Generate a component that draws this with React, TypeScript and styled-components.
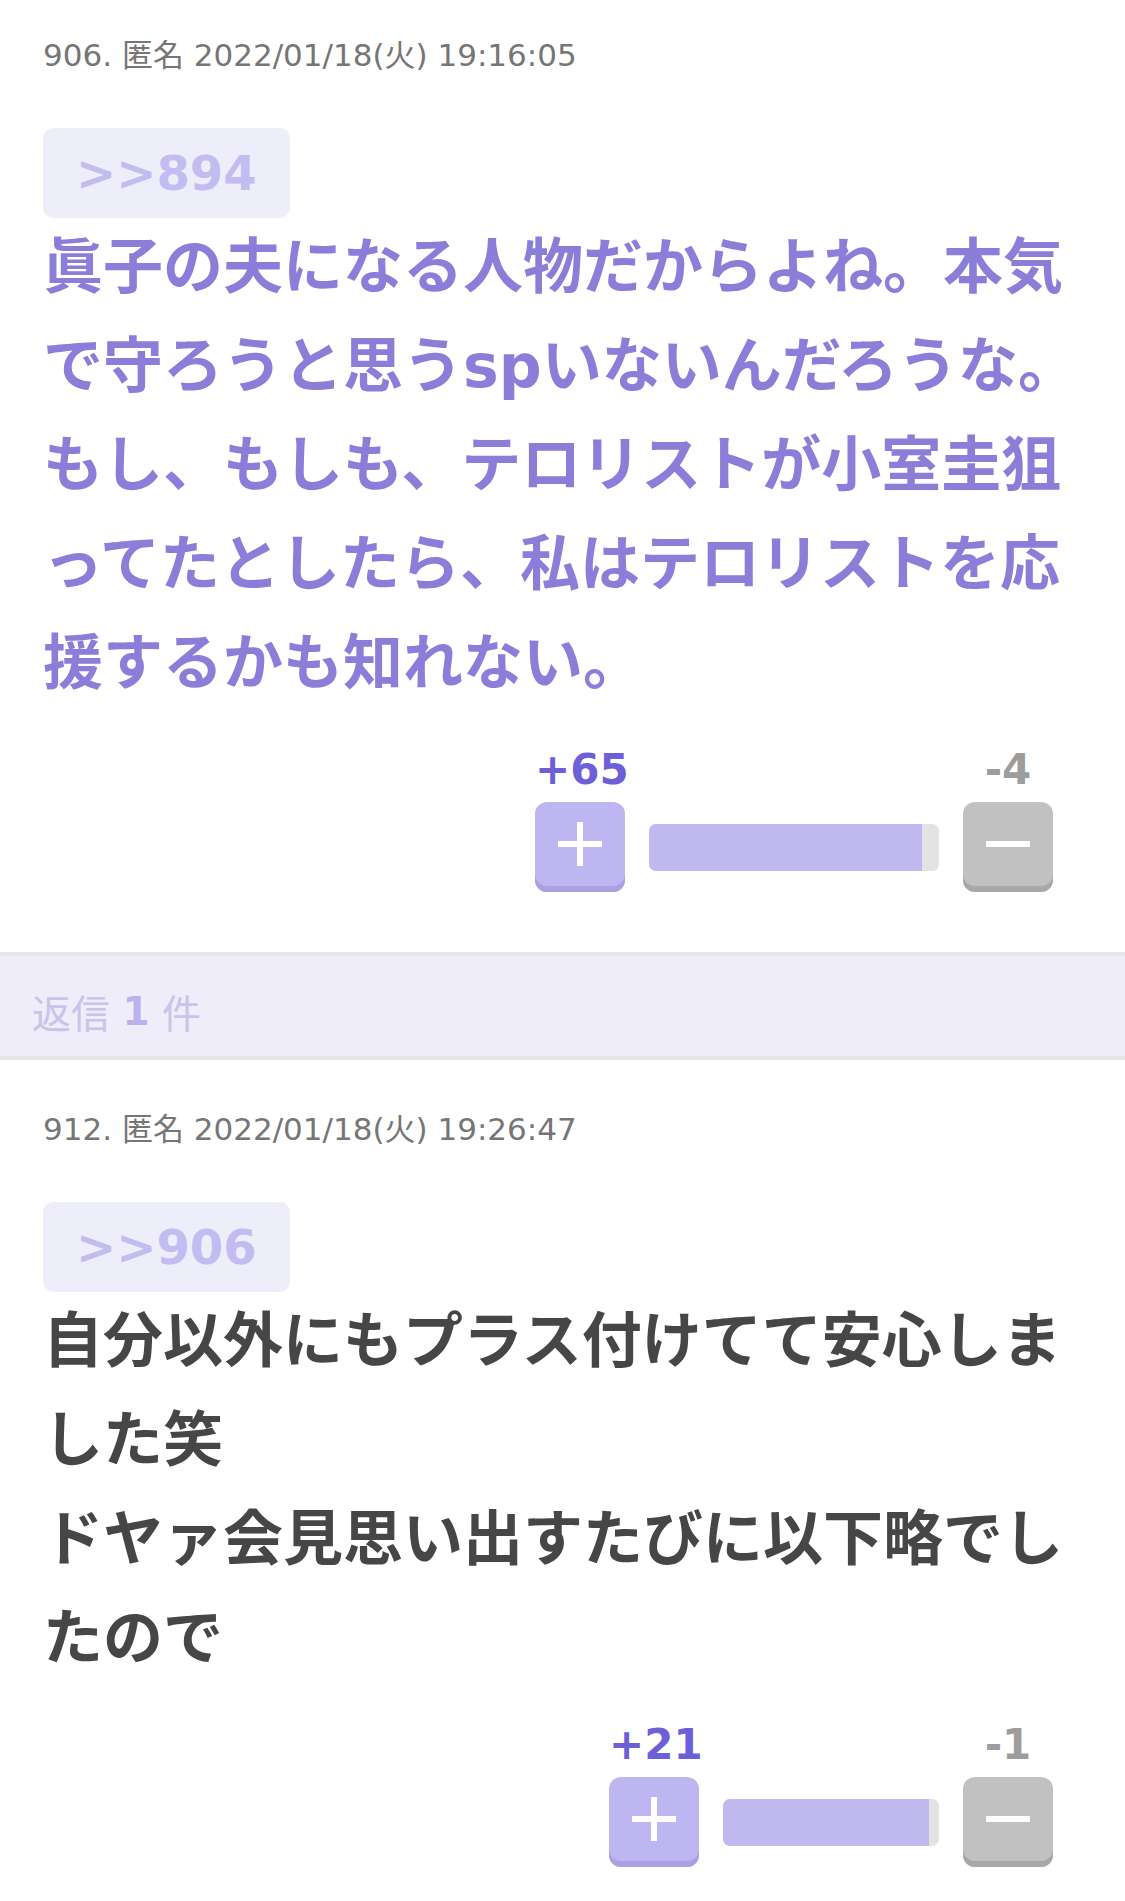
import React from "react"
import styled, { createGlobalStyle } from "styled-components"

const GlobalStyle = createGlobalStyle`
  html, body {
    margin: 0;
    padding: 0;
    background: #fff;
  }
  body {
    font-family: "DejaVu Sans", "Noto Sans CJK JP", sans-serif;
  }
`

interface PostData {
  no: number
  date: string
  anchor: number
  text: string
  accent: boolean
  up: number
  down: number
  bar: number
}

const posts: PostData[] = [
  {
    no: 906,
    date: "2022/01/18(火) 19:16:05",
    anchor: 894,
    text: "眞子の夫になる人物だからよね。本気で守ろうと思うspいないんだろうな。もし、もしも、テロリストが小室圭狙ってたとしたら、私はテロリストを応援するかも知れない。",
    accent: true,
    up: 65,
    down: 4,
    bar: 290,
  },
  {
    no: 912,
    date: "2022/01/18(火) 19:26:47",
    anchor: 906,
    text: "自分以外にもプラス付けてて安心しました笑\nドヤァ会見思い出すたびに以下略でしたので",
    accent: false,
    up: 21,
    down: 1,
    bar: 216,
  },
]

const Page = styled.div`
  width: 1125px;
  display: flex;
  flex-direction: column;
`

const Post = styled.section<{ $top: number }>`
  padding: ${({ $top }) => $top}px 30px 60px 43px;
  display: flex;
  flex-direction: column;
  align-items: flex-start;
`

const PostMeta = styled.div`
  font-size: 31px;
  line-height: 36px;
  color: #767676;
`

const Anchor = styled.div`
  margin-top: 55px;
  height: 90px;
  line-height: 90px;
  padding: 0 33px;
  border-radius: 10px;
  background: #eeedfa;
  color: #c2bcf0;
  font-size: 48px;
  font-weight: bold;
`

const Body = styled.p<{ $accent: boolean }>`
  align-self: stretch;
  margin: 0;
  font-size: 60px;
  line-height: 99px;
  font-weight: bold;
  white-space: pre-wrap;
  line-break: strict;
  color: ${({ $accent }) => ($accent ? "#8a7ed9" : "#464646")};
`

const Votes = styled.div<{ $bar: number }>`
  align-self: flex-end;
  margin: 32px 42px 0 0;
  display: grid;
  grid-template-columns: 90px ${({ $bar }) => $bar}px 90px;
  column-gap: 24px;
  row-gap: 8px;
`

const Count = styled.div<{ $up?: boolean }>`
  font-size: 42px;
  line-height: 49px;
  font-weight: bold;
  text-align: center;
  color: ${({ $up }) => ($up ? "#6d5fd8" : "#9d9d9d")};
`

const VoteButton = styled.button<{ $up?: boolean }>`
  width: 90px;
  height: 90px;
  padding: 0 0 6px;
  border: none;
  border-radius: 12px;
  display: flex;
  align-items: center;
  justify-content: center;
  background: ${({ $up }) => ($up ? "#bdb6f0" : "#c1c1c1")};
  box-shadow: inset 0 -6px 0 ${({ $up }) => ($up ? "#a9a1e3" : "#a8a8a8")};
`

const Bar = styled.div`
  align-self: center;
  height: 47px;
  border-radius: 7px;
  overflow: hidden;
  background: #e3e3e3;
`

const BarFill = styled.div`
  height: 100%;
  background: #c0b9ef;
`

const ReplyBar = styled.div`
  height: 90px;
  padding: 10px 0 0 32px;
  display: flex;
  align-items: center;
  border-top: 4px solid #e6e6ea;
  border-bottom: 4px solid #e6e6ea;
  background: #eeedf9;
  font-size: 39px;
  color: #c8c4ea;
  white-space: pre;
`

const ReplyCount = styled.b`
  color: #b9b2ef;
`

const PlusIcon = () => (
  <svg width="44" height="44" viewBox="0 0 44 44">
    <path d="M22 0V44M0 22H44" stroke="#fff" strokeWidth="6" />
  </svg>
)

const MinusIcon = () => (
  <svg width="44" height="44" viewBox="0 0 44 44">
    <path d="M0 22H44" stroke="#fff" strokeWidth="6" />
  </svg>
)

const VoteBox = ({ up, down, bar }: { up: number; down: number; bar: number }) => (
  <Votes $bar={bar}>
    <Count $up>+{up}</Count>
    <span />
    <Count>-{down}</Count>
    <VoteButton $up aria-label="plus">
      <PlusIcon />
    </VoteButton>
    <Bar>
      <BarFill style={{ width: `${(up / (up + down)) * 100}%` }} />
    </Bar>
    <VoteButton aria-label="minus">
      <MinusIcon />
    </VoteButton>
  </Votes>
)

const PostItem = ({ post, top }: { post: PostData; top: number }) => (
  <Post $top={top}>
    <PostMeta>
      {post.no}. 匿名 {post.date}
    </PostMeta>
    <Anchor>&gt;&gt;{post.anchor}</Anchor>
    <Body $accent={post.accent}>{post.text}</Body>
    <VoteBox up={post.up} down={post.down} bar={post.bar} />
  </Post>
)

export default function App() {
  return (
    <>
      <GlobalStyle />
      <Page>
        <PostItem post={posts[0]} top={37} />
        <ReplyBar>
          返信 <ReplyCount>1</ReplyCount> 件
        </ReplyBar>
        <PostItem post={posts[1]} top={51} />
      </Page>
    </>
  )
}
